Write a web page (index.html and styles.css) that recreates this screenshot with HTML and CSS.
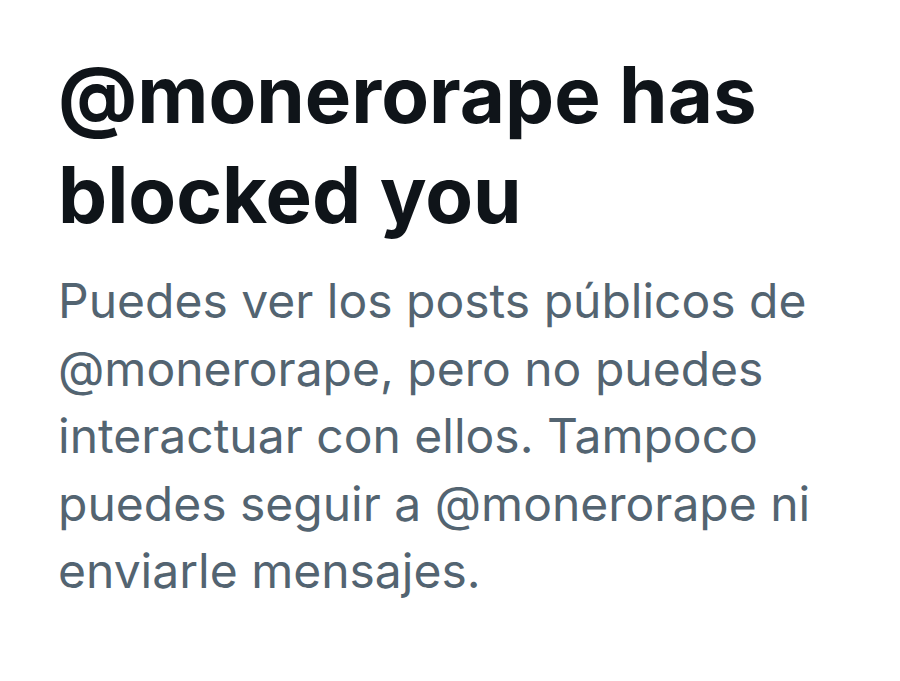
FILE: index.html
```html
<!DOCTYPE html>
<html>
<head>
<meta charset="utf-8">
<link rel="stylesheet" href="styles.css">
</head>
<body>
<main class="blocked">
  <h1 class="title">@monerorape has blocked you</h1>
  <p class="desc">Puedes ver los posts públicos de @monerorape, pero no puedes interactuar con ellos. Tampoco puedes seguir a @monerorape ni enviarle mensajes.</p>
</main>
</body>
</html>
```
FILE: styles.css
```css
html, body {
  margin: 0;
  padding: 0;
  background: #ffffff;
}
.blocked {
  padding: 45px 40px 0 58px;
  font-family: Inter, Roboto, "Liberation Sans", sans-serif;
}
.title {
  margin: 0;
  font-size: 78px;
  line-height: 100px;
  font-weight: 700;
  color: #0f1419;
}
.desc {
  margin: 22px 0 0 0;
  font-size: 48px;
  line-height: 67.5px;
  font-weight: 400;
  color: #536471;
}
```
